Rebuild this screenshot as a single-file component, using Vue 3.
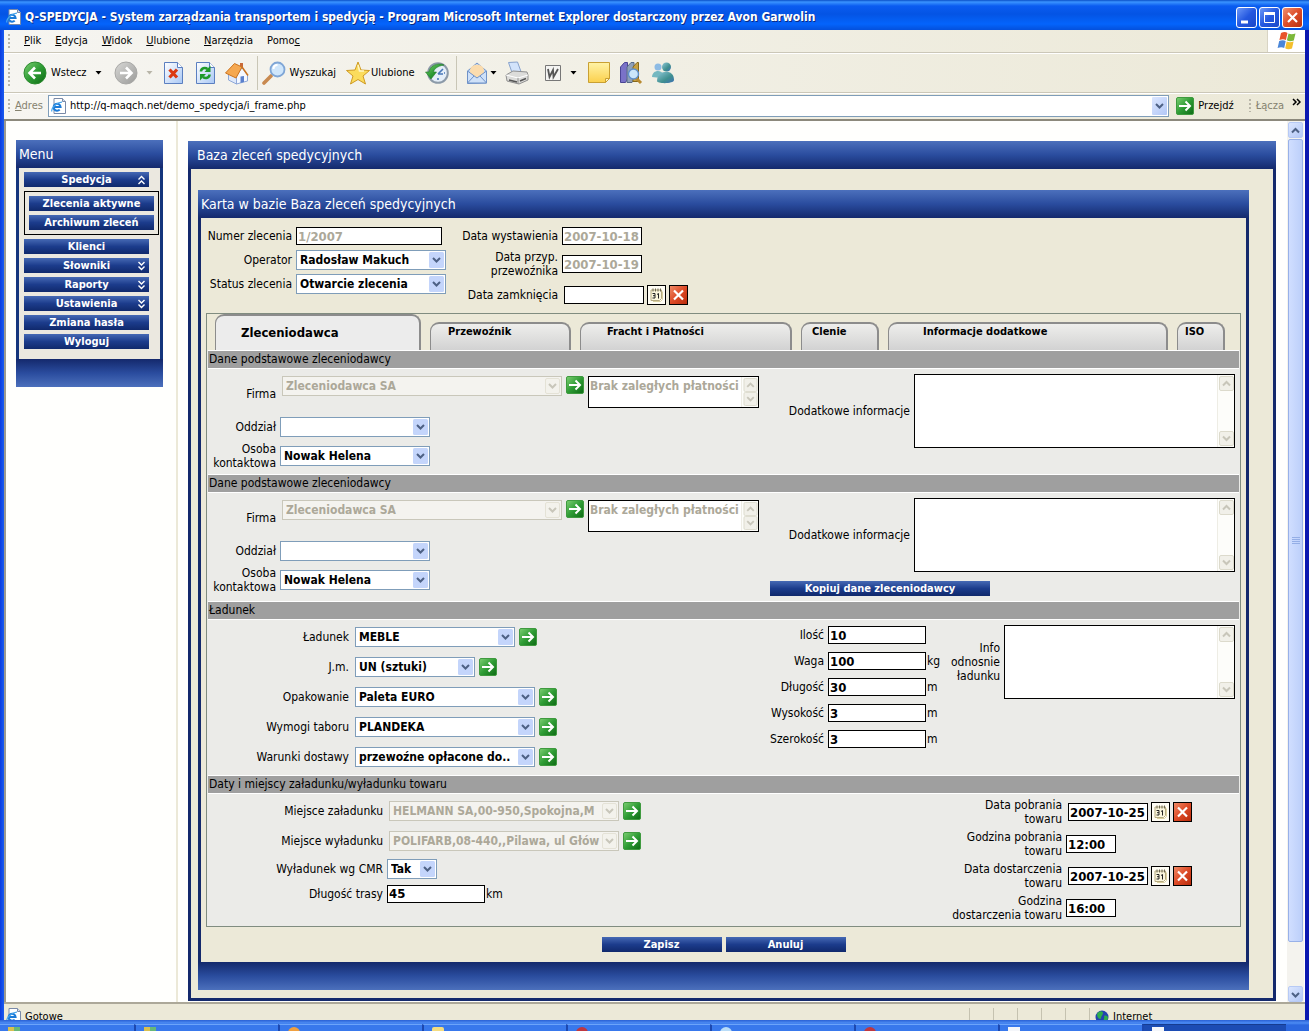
<script setup>
import { ref } from 'vue'

const menuBar = [
  ['P', 'lik'], ['E', 'dycja'], ['W', 'idok'], ['U', 'lubione'], ['N', 'arzędzia'],
]

const sideTop = { label: 'Spedycja', icon: 'up' }
const sideSub = ['Zlecenia aktywne', 'Archiwum zleceń']
const sideRest = [
  { label: 'Klienci' },
  { label: 'Słowniki', icon: 'down' },
  { label: 'Raporty', icon: 'down' },
  { label: 'Ustawienia', icon: 'down' },
  { label: 'Zmiana hasła' },
  { label: 'Wyloguj' },
]

const tabs = [
  { id: 'client', label: 'Zleceniodawca' },
  { id: 'carrier', label: 'Przewoźnik' },
  { id: 'freight', label: 'Fracht i Płatności' },
  { id: 'customs', label: 'Clenie' },
  { id: 'extra', label: 'Informacje dodatkowe' },
  { id: 'iso', label: 'ISO' },
]
const activeTab = ref('client')

const parties = [
  { id: 'a', debt: 'Brak zaległych płatności', copy: false },
  { id: 'b', debt: 'Brak zaległych płatności', copy: true },
]

const cargo = [
  { id: 'ladunek', label: 'Ładunek', value: 'MEBLE', size: 'w160' },
  { id: 'jm', label: 'J.m.', value: 'UN (sztuki)', size: 'w120' },
  { id: 'opak', label: 'Opakowanie', value: 'Paleta EURO', size: 'w180' },
  { id: 'tabor', label: 'Wymogi taboru', value: 'PLANDEKA', size: 'w180' },
  { id: 'warunki', label: 'Warunki dostawy', value: 'przewoźne opłacone do..', size: 'w180' },
]

const measures = [
  { id: 'ilosc', label: 'Ilość', value: '10', unit: '' },
  { id: 'waga', label: 'Waga', value: '100', unit: 'kg' },
  { id: 'dlugosc', label: 'Długość', value: '30', unit: 'm' },
  { id: 'wysokosc', label: 'Wysokość', value: '3', unit: 'm' },
  { id: 'szerokosc', label: 'Szerokość', value: '3', unit: 'm' },
]

const places = [
  { id: 'zal', label: 'Miejsce załadunku', value: 'HELMANN SA,00-950,Spokojna,M' },
  { id: 'wyl', label: 'Miejsce wyładunku', value: 'POLIFARB,08-440,,Pilawa, ul Głów' },
]

const dates = [
  { id: 'dp', label: 'Data pobrania\ntowaru', value: '2007-10-25', picker: true },
  { id: 'gp', label: 'Godzina pobrania\ntowaru', value: '12:00' },
  { id: 'dd', label: 'Data dostarczenia\ntowaru', value: '2007-10-25', picker: true },
  { id: 'gd', label: 'Godzina\ndostarczenia towaru', value: '16:00' },
]

const tasks = ['win', 'win', 'orange', 'folder', 'red', 'lens', 'red', 'page', 'page']
</script>

<template>
  <div class="window">
    <svg class="sprite" aria-hidden="true">
      <defs>
        <linearGradient id="gGreen" x1="0" y1="0" x2="1" y2="1">
          <stop offset="0" stop-color="#7ccf72" /><stop offset=".5" stop-color="#2f9c35" /><stop offset="1" stop-color="#0d6a14" />
        </linearGradient>
        <linearGradient id="gGray" x1="0" y1="0" x2="1" y2="1">
          <stop offset="0" stop-color="#d8d8d6" /><stop offset="1" stop-color="#9a9a98" />
        </linearGradient>
        <linearGradient id="gRed" x1="0" y1="0" x2="1" y2="1">
          <stop offset="0" stop-color="#f08a66" /><stop offset=".5" stop-color="#dd4a26" /><stop offset="1" stop-color="#b92c0c" />
        </linearGradient>
        <linearGradient id="gPage" x1="0" y1="0" x2="1" y2="1">
          <stop offset="0" stop-color="#ffffff" /><stop offset="1" stop-color="#a9c8f5" />
        </linearGradient>
        <linearGradient id="gNote" x1="0" y1="0" x2="0" y2="1">
          <stop offset="0" stop-color="#fff3a6" /><stop offset="1" stop-color="#fbd04d" />
        </linearGradient>
        <linearGradient id="gTeal" x1="0" y1="0" x2="1" y2="1">
          <stop offset="0" stop-color="#8fc7d8" /><stop offset=".6" stop-color="#3f8f8f" /><stop offset="1" stop-color="#3d6fb5" />
        </linearGradient>
      </defs>
      <symbol id="go" viewBox="0 0 18 18">
        <rect x="0.5" y="0.5" width="17" height="17" rx="1.5" fill="url(#gGreen)" stroke="#3f9a3f" />
        <path d="M3 9h11M9.500 4.500L14 9l-4.500 4.500" fill="none" stroke="#fff" stroke-width="2" />
      </symbol>
      <symbol id="ie" viewBox="0 0 16 16">
        <path d="M3 .5h8.500l3 3v12H3z" fill="#fff" stroke="#7a8aa8" />
        <path d="M11.500.5v3h3" fill="#d6e0f2" stroke="#7a8aa8" />
        <path d="M2.800 9h6.800a3.500 3.500 0 1 0-.9 2.600" fill="none" stroke="#1c7bd8" stroke-width="2" />
        <path d="M1 13.500C-.5 10.500 6 4 11 4.200" fill="none" stroke="#48a6ec" stroke-width="1.200" />
      </symbol>
      <symbol id="cal" viewBox="0 0 17 17">
        <path d="M3 3.500h10.500v8.500l-2 2H3z" fill="#fbf6dc" stroke="#b5aa80" />
        <path d="M5 2v3M7.500 2v3M10 2v3M12.500 2v3" stroke="#6b6650" />
        <path d="M4.500 7h2.500v4.500H4.500M5 9.200h2M9 8l1.500-1v5" fill="none" stroke="#222" />
        <path d="M14.500 5v8l-2 2H5" fill="none" stroke="#d9cf9f" />
      </symbol>
      <symbol id="del" viewBox="0 0 17 18">
        <rect width="17" height="18" fill="url(#gRed)" />
        <path d="M4 4.500l9 9M13 4.500l-9 9" stroke="#fff" stroke-width="2.200" />
      </symbol>
      <symbol id="scroll" viewBox="0 0 15 15">
        <rect x="0.500" y="0.500" width="14" height="14" rx="1.500" fill="#f1f0e9" stroke="#dcdacc" />
        <path d="M4 9.500L7.500 6l3.500 3.500" fill="none" stroke="#c8c6ba" stroke-width="2" />
      </symbol>
      <symbol id="chev" viewBox="0 0 9 10">
        <path d="M1.500 1l3 3 3-3M1.500 5.500l3 3 3-3" fill="none" stroke="#fff" stroke-width="1.400" />
      </symbol>
      <symbol id="caret" viewBox="0 0 7 4"><path d="M0.500 0h6L3.500 3.500z" fill="currentColor" /></symbol>
    </svg>

    <header class="titlebar">
      <svg class="i16"><use href="#ie" /></svg>
      <span class="caption">Q-SPEDYCJA - System zarządzania transportem i spedycją - Program Microsoft Internet Explorer dostarczony przez Avon Garwolin</span>
      <div class="winbtns">
        <button type="button" class="winbtn" aria-label="Minimalizuj">
          <svg width="19" height="19"><path d="M4 14h7" stroke="#fff" stroke-width="3" /></svg>
        </button>
        <button type="button" class="winbtn" aria-label="Maksymalizuj">
          <svg width="19" height="19"><path d="M4.500 4.500h10v10h-10z" fill="none" stroke="#fff" /><path d="M4 5.500h11" stroke="#fff" stroke-width="3" /></svg>
        </button>
        <button type="button" class="winbtn close" aria-label="Zamknij">
          <svg width="19" height="19"><path d="M5 5l9 9M14 5l-9 9" stroke="#fff" stroke-width="2.200" /></svg>
        </button>
      </div>
    </header>

    <div class="chrome">
      <nav class="menubar">
        <i class="grip"></i>
        <button v-for="m in menuBar" :key="m[1]" type="button" class="flat"><u>{{ m[0] }}</u>{{ m[1] }}</button>
        <button type="button" class="flat">Pomo<u>c</u></button>
        <span class="flag">
          <svg width="22" height="20" viewBox="0 0 22 20">
            <path d="M5 2c3-1.500 5-1 6.500 0l-1.600 7C8 8 6 8 3.400 9z" fill="#e8542a" />
            <path d="M12.500 2.500c2 1 4 1 7 0L17.800 9.500c-3 1-5 .8-6.900-.2z" fill="#7cb83a" />
            <path d="M3.200 10c2.500-1 4.500-1 6.500 0L8.200 17c-2-1-4-1-6.600 0z" fill="#4a86d8" />
            <path d="M10.700 10.500c2 1 4 1.100 6.900 0L16 17.500c-3 1-5 .8-6.800-.2z" fill="#f4bf2c" />
          </svg>
        </span>
      </nav>

      <div class="toolbar">
        <div class="tgroup">
          <i class="grip"></i>
          <button type="button" class="flat tool">
            <svg class="i24" viewBox="0 0 24 24"><circle cx="12" cy="12" r="11" fill="url(#gGreen)" stroke="#2b8a2e" /><path d="M18 12H7M12 6.500L6.500 12l5.500 5.500" fill="none" stroke="#fff" stroke-width="2.600" /></svg>
            <span>Wstecz</span>
            <svg class="caret far"><use href="#caret" /></svg>
          </button>
          <button type="button" class="flat tool dim">
            <svg class="i24" viewBox="0 0 24 24"><circle cx="12" cy="12" r="11" fill="url(#gGray)" stroke="#a8a8a6" /><path d="M6 12h11M12 6.500l5.500 5.500-5.500 5.500" fill="none" stroke="#fff" stroke-width="2.600" /></svg>
            <svg class="caret far"><use href="#caret" /></svg>
          </button>
          <button type="button" class="flat tool" aria-label="Zatrzymaj">
            <svg class="i24" viewBox="0 0 24 24"><path d="M3.500 1.500h13l5 5v16h-18z" fill="url(#gPage)" stroke="#5b7fc0" /><path d="M16.500 1.500v5h5" fill="#fff" stroke="#5b7fc0" /><path d="M8.500 8.500l7.500 8M16 8.500l-7.500 8" stroke="#dc3a12" stroke-width="3.200" /></svg>
          </button>
          <button type="button" class="flat tool" aria-label="Odśwież">
            <svg class="i24" viewBox="0 0 24 24"><path d="M3.500 1.500h13l5 5v16h-18z" fill="url(#gPage)" stroke="#5b7fc0" /><path d="M16.500 1.500v5h5" fill="#fff" stroke="#5b7fc0" /><path d="M8 10.500c0-3.500 4-4.500 6.500-2.500" fill="none" stroke="#1e9a2a" stroke-width="2.600" /><path d="M17.500 4.500v6.500h-6z" fill="#1e9a2a" /><path d="M16.500 13.500c0 3.500-4 4.500-6.500 2.500" fill="none" stroke="#1e9a2a" stroke-width="2.600" /><path d="M7 19.500V13h6z" fill="#1e9a2a" /></svg>
          </button>
          <button type="button" class="flat tool" aria-label="Strona główna">
            <svg class="i24" viewBox="0 0 24 24"><path d="M15 2h3v6h-3z" fill="#c86a3a" /><path d="M3.500 12l8 5v6l-8-4z" fill="#dfe9fa" stroke="#8ea8d8" /><path d="M11.500 23v-8L17 6.500l5.500 7.500v6z" fill="#f4f8ff" stroke="#8ea8d8" /><path d="M.5 12L9.500 2.500 17 6l-6 11z" fill="#f5a850" stroke="#cc7420" /><path d="M17 6l6 8.500" stroke="#cc7420" stroke-width="1.500" /><path d="M15.500 15.500l3.500-.5v6l-3.500 1z" fill="#5a80cc" /></svg>
          </button>
        </div>
        <div class="tgroup mid">
          <button type="button" class="flat tool">
            <svg class="i24" viewBox="0 0 24 24"><path d="M2 22l7-7" stroke="#c98a50" stroke-width="3.600" stroke-linecap="round" /><circle cx="15.500" cy="8.500" r="7" fill="#cfe6fb" stroke="#7fa6d6" stroke-width="1.800" /><path d="M11.500 8c0-3 2-4 4-4" fill="none" stroke="#fff" stroke-width="2" /></svg>
            <span>Wyszukaj</span>
          </button>
          <button type="button" class="flat tool tight">
            <svg class="i24" viewBox="0 0 24 24"><path d="M12 1l3 8 8.500.5L17 15l2.500 8L12 18.500 4.500 23 7 15 .5 9.500 9 9z" fill="#fbdc5c" stroke="#cf9a22" /><path d="M12 4l1.500 6H18" fill="none" stroke="#fff6c4" stroke-width="1.500" /></svg>
            <span>Ulubione</span>
          </button>
          <button type="button" class="flat tool" aria-label="Historia">
            <svg class="i24" viewBox="0 0 24 24"><circle cx="13" cy="12" r="9.800" fill="#e4eef8" stroke="#8c9aa8" stroke-width="2" /><path d="M13 13l5-5M13 13h5M13 19v-2M20 12h-1" stroke="#4878b8" stroke-width="1.600" /><path d="M19 4C12 1 4.500 5.500 4 11H.5l5.500 7 5.500-7H8.500c.5-3 4-6 10.500-7z" fill="url(#gGreen)" stroke="#1f7a26" stroke-width=".6" /></svg>
          </button>
        </div>
        <div class="tgroup last">
          <button type="button" class="flat tool" aria-label="Poczta">
            <svg class="i24" viewBox="0 0 24 24"><path d="M2.500 10L12 2l9.500 8v12l-19 .5z" fill="#b9d3f4" stroke="#6f92c8" /><path d="M5 9c1-7 13-7 14 0v4l-7 4-7-4z" fill="#fbdcae" /><path d="M2.500 10L12 17l9.500-7v12h-19z" fill="#cfe1f8" stroke="#6f92c8" /><path d="M2.500 22L9 15M21.500 22L15 15" stroke="#6f92c8" /></svg>
            <svg class="caret"><use href="#caret" /></svg>
          </button>
          <button type="button" class="flat tool" aria-label="Drukuj">
            <svg class="i24" viewBox="0 0 24 24"><path d="M3.500 1.500l9-.5 4 11-9 1z" fill="#d2e3fb" stroke="#88a2cc" /><path d="M1 14l7-4 14 1 1 3v5l-9 4-12-3z" fill="#dcdcda" stroke="#909090" /><path d="M1 14l12 3 10-3" fill="none" stroke="#fff" /><path d="M13 17v6" stroke="#909090" /><path d="M4 19l8 2M15 20l6-2.500" stroke="#555" stroke-width="1.600" /></svg>
          </button>
          <button type="button" class="flat tool word" aria-label="Edytuj">
            <svg class="i24" viewBox="0 0 24 24"><path d="M4.500 4.500h15v15h-15z" fill="#f4f4f2" stroke="#777" /><path d="M7 8l1.500 8 3.500-7 .5 7L17 8" fill="none" stroke="#555" stroke-width="1.800" /></svg>
            <svg class="caret far"><use href="#caret" /></svg>
          </button>
          <button type="button" class="flat tool note" aria-label="Notatka">
            <svg class="i24" viewBox="0 0 24 24"><path d="M1.500 1.500h21v16l-4 4h-17z" fill="url(#gNote)" stroke="#c9a032" /><path d="M18.500 21.500v-4h4z" fill="#fff4bc" stroke="#c9a032" /></svg>
          </button>
          <button type="button" class="flat tool" aria-label="Badania">
            <svg class="i24" viewBox="0 0 24 24"><path d="M1.500 6l4-4.500h3V18l-2 3.500h-5z" fill="#7a72c8" stroke="#4a4494" /><path d="M8 6l4-4.500h3V18l-2 3.500H8z" fill="#8fa0b8" stroke="#566a88" /><path d="M14 6l4-4.500h1.500v19H14z" fill="#c8a040" stroke="#85681c" /><path d="M17 17l5 5" stroke="#b88a30" stroke-width="3" /><circle cx="14.500" cy="13" r="5" fill="#cbe6fa" stroke="#5f8fca" stroke-width="1.400" /></svg>
          </button>
          <button type="button" class="flat tool" aria-label="Messenger">
            <svg class="i24" viewBox="0 0 24 24"><circle cx="7" cy="6" r="3.500" fill="#8dbbe4" /><path d="M1 16c0-7 9-8 11-3l-2 4z" fill="#74b8c0" /><circle cx="15.500" cy="6" r="4.500" fill="url(#gTeal)" /><path d="M6 20c0-11 17-13 17-1 0 4-17 4-17 1z" fill="url(#gTeal)" /></svg>
          </button>
        </div>
      </div>

      <div class="address">
        <i class="grip"></i>
        <label for="url" class="muted"><u>A</u>dres</label>
        <div class="urlbox">
          <svg class="i16"><use href="#ie" /></svg>
          <input id="url" type="text" value="http://q-maqch.net/demo_spedycja/i_frame.php" />
          <button type="button" class="drop" aria-label="Rozwiń"><svg width="15" height="18"><path d="M4 7l3.500 3.500L11 7" fill="none" stroke="#4d6185" stroke-width="2" /></svg></button>
        </div>
        <button type="button" class="flat gobtn"><svg class="i18"><use href="#go" /></svg>Przejdź</button>
        <i class="grip"></i>
        <span class="muted">Łącza</span>
        <svg class="more" width="9" height="9"><path d="M1 1l3 3-3 3M5 1l3 3-3 3" fill="none" stroke="#000" stroke-width="1.500" /></svg>
      </div>
    </div>

    <div class="viewport">
      <aside class="sideframe">
        <nav class="side">
          <h2 class="bar">Menu</h2>
          <div class="sidebody">
            <button type="button" class="blue side-btn">{{ sideTop.label }}<svg class="chev flip"><use href="#chev" /></svg></button>
            <div class="submenu">
              <button v-for="s in sideSub" :key="s" type="button" class="blue side-btn">{{ s }}</button>
            </div>
            <button v-for="s in sideRest" :key="s.label" type="button" class="blue side-btn">
              {{ s.label }}<svg v-if="s.icon" class="chev"><use href="#chev" /></svg>
            </button>
          </div>
          <div class="foot"></div>
        </nav>
      </aside>

      <main class="mainframe">
        <section class="outer">
          <h1 class="bar wide">Baza zleceń spedycyjnych</h1>
          <form class="card" @submit.prevent>
            <h2 class="bar">Karta w bazie Baza zleceń spedycyjnych</h2>
            <div class="cardbody">
              <div class="top">
                <div class="topcol one">
                  <div class="row"><label for="nr">Numer zlecenia</label><input id="nr" class="txt w146" type="text" value="1/2007" disabled /></div>
                  <div class="row"><label for="op">Operator</label><select id="op" class="combo w150"><option>Radosław Makuch</option></select></div>
                  <div class="row"><label for="st">Status zlecenia</label><select id="st" class="combo w150"><option>Otwarcie zlecenia</option></select></div>
                </div>
                <div class="topcol two">
                  <div class="row"><label for="dw">Data wystawienia</label><input id="dw" class="txt w80" type="text" value="2007-10-18" disabled /></div>
                  <div class="row"><label for="dprz">Data przyp.<br />przewoźnika</label><input id="dprz" class="txt w80" type="text" value="2007-10-19" disabled /></div>
                  <div class="row">
                    <label for="dz">Data zamknięcia</label>
                    <span class="picker">
                      <input id="dz" class="txt w80" type="text" />
                      <button type="button" class="sq" aria-label="Kalendarz"><svg><use href="#cal" /></svg></button>
                      <button type="button" class="sq" aria-label="Usuń"><svg><use href="#del" /></svg></button>
                    </span>
                  </div>
                </div>
              </div>

              <div class="tabbox">
                <div class="tabs" role="tablist">
                  <button v-for="t in tabs" :key="t.id" type="button" role="tab" class="tab" :class="[t.id, { active: activeTab === t.id }]" :aria-selected="activeTab === t.id" @click="activeTab = t.id">{{ t.label }}</button>
                </div>

                <template v-for="p in parties" :key="p.id">
                  <h3>Dane podstawowe zleceniodawcy</h3>
                  <div class="sect">
                    <div class="left party">
                      <div class="row firm">
                        <label :for="'firma' + p.id">Firma</label>
                        <select :id="'firma' + p.id" class="combo w280" disabled><option>Zleceniodawca SA</option></select>
                        <button type="button" class="go" aria-label="Otwórz"><svg><use href="#go" /></svg></button>
                        <span class="area small">
                          <textarea v-model="p.debt" aria-label="Płatności" disabled></textarea>
                          <span class="rail"><svg><use href="#scroll" /></svg><svg class="flip"><use href="#scroll" /></svg></span>
                        </span>
                      </div>
                      <div class="row"><label :for="'oddz' + p.id">Oddział</label><select :id="'oddz' + p.id" class="combo w150"><option></option></select></div>
                      <div class="row"><label :for="'osoba' + p.id">Osoba<br />kontaktowa</label><select :id="'osoba' + p.id" class="combo w150"><option>Nowak Helena</option></select></div>
                    </div>
                    <div class="right">
                      <div class="info">
                        <label :for="'info' + p.id">Dodatkowe informacje</label>
                        <span class="area big">
                          <textarea :id="'info' + p.id"></textarea>
                          <span class="rail"><svg><use href="#scroll" /></svg><svg class="flip"><use href="#scroll" /></svg></span>
                        </span>
                      </div>
                      <button v-if="p.copy" type="button" class="blue copy">Kopiuj dane zleceniodawcy</button>
                    </div>
                  </div>
                </template>

                <h3>Ładunek</h3>
                <div class="sect">
                  <div class="left cargo">
                    <div v-for="c in cargo" :key="c.id" class="row">
                      <label :for="c.id">{{ c.label }}</label>
                      <select :id="c.id" class="combo" :class="c.size"><option>{{ c.value }}</option></select>
                      <button type="button" class="go" aria-label="Otwórz"><svg><use href="#go" /></svg></button>
                    </div>
                  </div>
                  <div class="measures">
                    <div v-for="m in measures" :key="m.id" class="row">
                      <label :for="m.id">{{ m.label }}</label>
                      <input :id="m.id" class="txt w98" type="text" :value="m.value" /><span class="unit">{{ m.unit }}</span>
                    </div>
                  </div>
                  <div class="info cargoinfo">
                    <label for="infoc">Info<br />odnosnie<br />ładunku</label>
                    <span class="area mid">
                      <textarea id="infoc"></textarea>
                      <span class="rail"><svg><use href="#scroll" /></svg><svg class="flip"><use href="#scroll" /></svg></span>
                    </span>
                  </div>
                </div>

                <h3>Daty i miejscy załadunku/wyładunku towaru</h3>
                <div class="sect">
                  <div class="left places">
                    <div v-for="p in places" :key="p.id" class="row tall">
                      <label :for="p.id">{{ p.label }}</label>
                      <select :id="p.id" class="combo w230" disabled><option>{{ p.value }}</option></select>
                      <button type="button" class="go" aria-label="Otwórz"><svg><use href="#go" /></svg></button>
                    </div>
                    <div class="row"><label for="cmr">Wyładunek wg CMR</label><select id="cmr" class="combo w50"><option>Tak</option></select></div>
                    <div class="row"><label for="trasa">Długość trasy</label><input id="trasa" class="txt w98" type="text" value="45" /><span class="unit">km</span></div>
                  </div>
                  <div class="dates">
                    <div v-for="d in dates" :key="d.id" class="row">
                      <label :for="d.id">{{ d.label }}</label>
                      <span v-if="d.picker" class="picker">
                        <input :id="d.id" class="txt w80" type="text" :value="d.value" />
                        <button type="button" class="sq" aria-label="Kalendarz"><svg><use href="#cal" /></svg></button>
                        <button type="button" class="sq" aria-label="Usuń"><svg><use href="#del" /></svg></button>
                      </span>
                      <input v-else :id="d.id" class="txt w50" type="text" :value="d.value" />
                    </div>
                  </div>
                </div>
              </div>

              <div class="actions">
                <button type="submit" class="blue act">Zapisz</button>
                <button type="button" class="blue act">Anuluj</button>
              </div>
            </div>
            <div class="foot"></div>
          </form>
        </section>
      </main>

      <div class="vscroll">
        <span class="sbtn"><svg width="15" height="15"><path d="M4 9.500L7.500 6l3.500 3.500" fill="none" stroke="#4d6185" stroke-width="2" /></svg></span>
        <span class="thumb"><svg width="8" height="8"><path d="M0 .5h8M0 2.500h8M0 4.500h8M0 6.500h8" stroke="#94aee6" /></svg></span>
        <span class="sbtn"><svg width="15" height="15"><path d="M4 6l3.500 3.500L11 6" fill="none" stroke="#4d6185" stroke-width="2" /></svg></span>
      </div>
    </div>

    <footer class="status">
      <svg class="i16"><use href="#ie" /></svg>
      <span class="ready">Gotowe</span>
      <i v-for="n in 5" :key="n" class="cell"></i>
      <span class="zone">
        <svg width="14" height="14" viewBox="0 0 14 14"><circle cx="7" cy="7" r="6.500" fill="#2444b0" /><path d="M2 4c2-4 6-3 6-1S6 6 6 8s-4 1-4-4zM9 6c2-1 4 0 4 2s-3 4-4 3 1-3 0-5z" fill="#2fae4c" /></svg>
        Internet
      </span>
    </footer>
    <div class="taskbar">
      <span v-for="(t, i) in tasks" :key="i" class="task" :class="{ on: i === 8 }"><i :class="t"></i></span>
    </div>
  </div>
</template>

<style>
body { margin: 0; background: #0a2fd0; }
</style>

<style scoped>
.window {
  box-sizing: border-box;
  min-height: 100vh;
  display: flex;
  flex-direction: column;
  font: 12px/14px "DejaVu Sans Condensed", "DejaVu Sans", sans-serif;
  color: #000;
  background: linear-gradient(90deg, #0a3be0 0, #1a5cf0 4px, #0a2fd0 50%, #0a18b0 100%);
}
.window *, .window *::before { box-sizing: border-box; }
.sprite { position: absolute; width: 0; height: 0; }
button { font: inherit; color: inherit; margin: 0; padding: 0; border: 0; background: none; }
svg { display: block; flex: none; }
h1, h2, h3 { margin: 0; font-weight: normal; }
.i16 { width: 16px; height: 16px; }
.i18 { width: 18px; height: 18px; }
.i24 { width: 24px; height: 24px; }

.titlebar {
  height: 30px;
  display: flex;
  align-items: center;
  padding: 4px 6px 0 6px;
  gap: 3px;
  background: linear-gradient(#0a50c8 0, #3a94ff 2px, #0a5cf0 6px, #0454e4 14px, #0464fc 24px, #0450dc 30px);
}
.caption { flex: 1; font: bold 12px/16px "DejaVu Sans Condensed", sans-serif; color: #fff; text-shadow: 1px 1px 0 #0a2a80; white-space: nowrap; overflow: hidden; }
.winbtns { display: flex; gap: 2px; }
.winbtn { width: 21px; height: 21px; border: 1px solid #fff; border-radius: 3px; background: linear-gradient(135deg, #6c98f8, #2458e0 50%, #1a48c8); }
.winbtn.close { background: linear-gradient(135deg, #f09070, #dc4c28 50%, #b83010); }

.chrome { margin: 0 4px; background: linear-gradient(90deg, #f6f5f1, #ece9d8); font-size: 11px; }
.flat { white-space: nowrap; }
.grip { flex: none; width: 2px; align-self: stretch; margin: 4px 0; background: repeating-linear-gradient(#b8b5a8 0 2px, transparent 2px 4px); }
.menubar { height: 23px; display: flex; align-items: center; gap: 14px; padding-left: 4px; border-bottom: 1px solid #cbc7b8; }
.flag { margin-left: auto; width: 38px; height: 22px; display: flex; align-items: center; justify-content: center; background: #fff; border-left: 1px solid #d8d4c4; }
.toolbar { height: 40px; display: flex; border-top: 1px solid #fff; border-bottom: 1px solid #cbc7b8; padding: 2px 0 2px 4px; }
.tgroup { display: flex; align-items: center; gap: 8px; padding-right: 8px; border-right: 1px solid #c9c6b6; }
.tgroup .grip { margin-right: 5px; }
.tgroup.mid { padding: 0 7px 0 4px; gap: 10px; }
.tgroup.last { padding-left: 8px; border: 0; }
.tool { display: flex; align-items: center; gap: 4px; }
.tool.tight, .last .tool { gap: 1px; }
.tool.dim { color: #b8b5a8; padding-left: 4px; }
.tool.word { padding-left: 4px; }
.tool.note { padding-left: 2px; }
.caret { width: 7px; height: 4px; }
.caret.far { margin-left: 4px; }

.address { height: 28px; display: flex; align-items: center; gap: 4px; padding: 1px 4px 3px 4px; border-top: 1px solid #fff; border-bottom: 2px solid #8c897c; }
.muted { color: #85826f; padding-left: 1px; }
.urlbox { flex: 1; display: flex; align-items: center; height: 22px; margin-left: 1px; padding: 1px 1px 1px 2px; border: 1px solid #7f9db9; background: #fff; }
.urlbox input { flex: 1; min-width: 0; border: 0; padding: 0 0 0 3px; font: inherit; background: none; }
.drop { width: 15px; height: 18px; background: linear-gradient(135deg, #dbe6ff, #b3c8f6); border-radius: 1px; }
.gobtn { display: flex; align-items: center; gap: 4px; padding: 0 11px 0 3px; }
.more { align-self: flex-start; margin: 3px 0 0 4px; }

.viewport { flex: 1; display: flex; margin: 0 4px; border-left: 2px solid #9c9a90; background: #fffffd; }
.sideframe { flex: none; width: 172px; padding: 19px 0 0 10px; border-right: 2px solid #ece9d8; }
.side { width: 147px; }
.bar { height: 28px; padding-left: 3px; font-size: 14px; line-height: 28px; color: #fff; background: linear-gradient(#4c70bc, #2a4c9e 50%, #14296c); }
.bar.wide { padding-left: 9px; }
.foot { height: 28px; background: linear-gradient(#14296c, #2a4c9e 50%, #4c70bc); }
.sidebody { display: flex; flex-direction: column; gap: 4px; padding: 4px 0 10px 5px; border: solid #14357c; border-width: 0 3px; background: #ebe8e0; }
.submenu { display: flex; flex-direction: column; gap: 4px; width: 135px; padding: 4px; border: 1px solid #000; }
.blue { position: relative; height: 15px; font-size: 11px; font-weight: bold; line-height: 14px; color: #fff; background: linear-gradient(#4669b4, #1c3c8c 50%, #10296c); }
.side-btn { width: 125px; }
.chev { position: absolute; right: 3px; top: 3px; width: 9px; height: 10px; }
.flip { transform: rotate(180deg); }

.mainframe { flex: 1; min-width: 0; padding: 20px 11px 1px 10px; }
.outer { border: solid #14296c; border-width: 0 3px 3px; background: #ece9d8; }
.outer > .bar { margin: 0 -3px; }
.card { margin: 21px 24px 8px 7px; }
.cardbody { padding: 6px 5px 10px; border: solid #14296c; border-width: 0 3px; }
.top { display: flex; padding-bottom: 3px; }
.row { display: flex; align-items: center; gap: 4px; }
.row label, .info label { flex: none; text-align: right; white-space: pre-line; }
.topcol .row:nth-child(1) { height: 24px; }
.one .row { height: 24px; }
.one label { width: 86px; }
.two label { width: 112px; }
.two .row:nth-child(2) { height: 32px; }
.two .row:nth-child(3) { height: 30px; }

.txt { height: 18px; padding: 0 1px; border: 1px solid #000; border-radius: 0; background: #fff; font: bold 13px/16px "DejaVu Sans Condensed", "DejaVu Sans", sans-serif; color: #000; }
.txt:disabled { color: #aca899; }
.combo {
  appearance: none;
  height: 20px;
  padding: 0 18px 0 3px;
  border: 1px solid #7f9db9;
  border-radius: 0;
  font: bold 12px/18px "DejaVu Sans Condensed", "DejaVu Sans", sans-serif;
  color: #000;
  background: #fff url("data:image/svg+xml,%3Csvg xmlns='http://www.w3.org/2000/svg' width='15' height='16'%3E%3Crect width='15' height='16' rx='1.500' fill='%23c4d5fb'/%3E%3Cpath d='M4 6l3.500 3.500L11 6' fill='none' stroke='%234d6185' stroke-width='2'/%3E%3C/svg%3E") no-repeat right 1px center;
}
.combo:disabled {
  margin-left: 2px;
  opacity: 1;
  color: #aca899;
  border-color: #c9c7ba;
  background: #f4f3ef url("data:image/svg+xml,%3Csvg xmlns='http://www.w3.org/2000/svg' width='15' height='16'%3E%3Crect x='.5' y='.5' width='14' height='15' rx='1.500' fill='%23f3f2ec' stroke='%23e4e2d6'/%3E%3Cpath d='M4 6l3.500 3.500L11 6' fill='none' stroke='%23c8c6ba' stroke-width='2'/%3E%3C/svg%3E") no-repeat right 1px center;
}
.w50 { width: 50px; } .w80 { width: 80px; } .w98 { width: 98px; } .w120 { width: 120px; } .w146 { width: 146px; }
.w150 { width: 150px; } .w160 { width: 160px; } .w180 { width: 180px; } .w230 { width: 230px; } .w280 { width: 280px; }
.picker { display: flex; align-items: center; gap: 3px; padding-left: 2px; }
.sq { width: 19px; height: 20px; border: 1px solid #000; background: #fffdf4; overflow: hidden; }
.sq svg { width: 17px; height: 18px; }
.go, .go svg { width: 18px; height: 18px; }

.tabbox { border: 1px solid #808c80; background: #ebebe8; padding: 0 1px; }
.tabs { display: grid; grid-template-columns: 206px 141px 212px 78px 280px 48px; gap: 9px; align-items: end; height: 36px; margin: 0 -1px; padding: 0 0 0 8px; background: #ece9d8; }
.tab { height: 28px; padding: 0 0 11px; border: solid #8c8c8c; border-width: 2px 2px 0 1px; border-radius: 9px 9px 0 0; background: linear-gradient(#eeeeec, #d2d2d2); font-size: 11px; font-weight: bold; line-height: 14px; text-align: left; white-space: nowrap; }
.tab.active { height: 36px; padding-bottom: 0; background: #ececec; font-size: 13px; }
.tab.client { padding-left: 25px; }
.tab.carrier { padding-left: 17px; }
.tab.freight { padding-left: 26px; }
.tab.customs { padding-left: 10px; }
.tab.extra { padding-left: 34px; }
.tab.iso { padding-left: 7px; }

h3 { height: 19px; padding-left: 1px; border: solid #fff; border-width: 1px 0; background: #9f9f9f; font-size: 12px; line-height: 17px; }
.sect { display: flex; align-items: flex-start; }
.left { flex: 1; min-width: 0; padding-bottom: 3px; }
.party { padding: 3px 0 4px; }
.party label { width: 68px; }
.party .row { height: 30px; }
.party .row:last-child { height: 28px; }
.party .row.firm { height: 40px; align-items: flex-start; padding-top: 4px; }
.firm label { align-self: center; }
.right { width: 469px; padding: 5px 4px 5px 0; }
.info { display: flex; align-items: center; gap: 4px; }
.right .info { justify-content: flex-end; }
.copy { display: block; width: 220px; margin-top: 9px; }
.area { position: relative; flex: none; display: block; }
.area textarea { display: block; width: 100%; height: 100%; margin: 0; padding: 1px 16px 0 1px; border: 1px solid #000; border-radius: 0; resize: none; overflow: hidden; background: #fff; font: bold 12px/16px "DejaVu Sans Condensed", "DejaVu Sans", sans-serif; white-space: nowrap; }
.area textarea:disabled { color: #aca899; }
.area.small { width: 171px; height: 32px; }
.area.big { width: 321px; height: 74px; }
.area.mid { width: 231px; height: 74px; }
.rail { position: absolute; top: 1px; right: 1px; bottom: 1px; width: 17px; padding: 1px; display: flex; flex-direction: column; justify-content: space-between; background: #fdfdfa; border-left: 1px solid #eeede5; pointer-events: none; }
.rail svg { width: 15px; height: 15px; }
.small .rail svg { height: 14px; }

.cargo { padding-top: 2px; }
.cargo .row { height: 30px; }
.cargo label { width: 141px; margin-right: 2px; }
.measures { width: 186px; padding-top: 2px; }
.measures .row { height: 26px; }
.measures label { width: 60px; }
.unit { margin-left: -3px; }
.cargoinfo { padding: 5px 4px 0 0; }
.cargoinfo label { width: 50px; }

.places { padding-top: 2px; }
.places label { width: 175px; }
.places .row { height: 25px; }
.places .row.tall { height: 30px; }
.dates { width: 297px; padding: 2px 0; }
.dates .row { height: 32px; }
.dates label { width: 120px; }

.actions { display: flex; justify-content: center; gap: 4px; padding-top: 10px; }
.act { width: 120px; }

.vscroll { flex: none; width: 17px; margin-right: 1px; display: flex; flex-direction: column; gap: 1px; padding: 1px 1px 0; background: #f4f3ee; }
.sbtn { display: flex; justify-content: center; align-items: center; height: 16px; border-radius: 2px; border: 1px solid #b7caf5; background: linear-gradient(135deg, #dbe6ff, #b3c8f6); }
.thumb { flex: 1; display: flex; align-items: center; justify-content: center; margin-bottom: 43px; border: 1px solid #98b1e8; border-radius: 2px; background: linear-gradient(90deg, #d0deff, #bccffa); }

.status { flex: none; height: 18px; display: flex; margin: 0 4px; padding: 4px 0 0 2px; border-top: 2px solid #aca899; background: #ece9d8; font-size: 11px; overflow: hidden; }
.ready { flex: 1; padding: 2px 0 0 3px; }
.cell { width: 24px; border-left: 1px solid #c5c2b0; }
.zone { display: flex; gap: 4px; width: 216px; padding: 2px 0 0 5px; border-left: 1px solid #c5c2b0; }
.taskbar { flex: none; height: 11px; display: flex; background: linear-gradient(#2a60d4, #4c8cf4 3px, #2c68e0 5px); overflow: hidden; }
.task { flex: none; width: 144px; height: 11px; margin-top: 4px; padding-left: 4px; border-left: 2px solid #1c48b0; border-top: 1px solid #6ca4fa; background: #3878ec; }
.task:first-child { width: 134px; border-left: 0; }
.task.on { background: #1c4cb4; border-top-color: #163c90; }
.task i { display: block; width: 12px; height: 12px; margin: 2px 0 0 4px; border-radius: 6px; }
.task i.win { border-radius: 0; background: linear-gradient(90deg, #d8c050 50%, #68b878 50%); }
.task i.orange { background: #f0a040; }
.task i.folder { border-radius: 2px; background: #f4dc80; }
.task i.red { background: #c03840; }
.task i.lens { background: #b8dcf8; }
.task i.page { border-radius: 0; background: #f4f6fa; }
</style>
